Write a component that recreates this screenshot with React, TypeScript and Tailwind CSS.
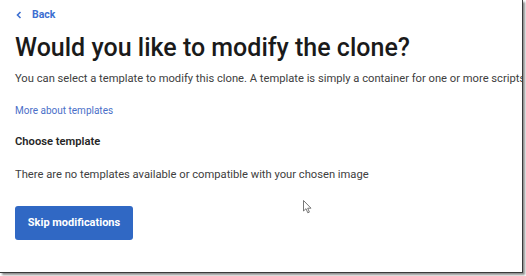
import React from "react";

export default function App() {
  return (
    <div className="w-[526px] h-[276px] bg-white" style={{ fontFamily: "Roboto, 'Liberation Sans', sans-serif" }}>
      <div className="w-[523px] h-[273px] bg-white overflow-hidden border-r border-b border-[#3a3a3a] shadow-[2px_2px_2px_rgba(0,0,0,0.45)] relative">
        <div className="pl-[15px] pt-[8px]">
          <a className="flex items-center gap-[10px] text-[10.5px] font-bold text-[#3d6fd1] h-[14px]">
            <svg width="6" height="8" viewBox="0 0 6 8" className="ml-[1px]">
              <path d="M4.5 1 L1.5 4 L4.5 7" fill="none" stroke="#3d6fd1" strokeWidth="1.6" />
            </svg>
            <span>Back</span>
          </a>
          <h1 className="mt-[10px] text-[25px] leading-[32px] font-medium text-[#1a1a1a]">
            Would you like to modify the clone?
          </h1>
          <p className="mt-[7px] text-[11.2px] leading-[16px] text-[#404040] whitespace-nowrap">
            You can select a template to modify this clone. A template is simply a container for one or more scripts
          </p>
          <p className="mt-[17px] text-[10px] leading-[14px] text-[#4a6fc8]">More about templates</p>
          <h2 className="mt-[16px] text-[11.2px] leading-[16px] font-semibold text-[#262626]">Choose template</h2>
          <p className="mt-[17px] text-[11.2px] leading-[16px] text-[#404040]">
            There are no templates available or compatible with your chosen image
          </p>
          <button className="mt-[23px] w-[118px] h-[34px] rounded-[3px] bg-[#3068c4] text-white text-[11px] font-bold">
            Skip modifications
          </button>
        </div>
        <svg className="absolute left-[303px] top-[200px]" width="9" height="14" viewBox="0 0 9 14">
          <path d="M0.5 0.5 L0.5 11 L3 8.7 L4.8 12.8 L6.4 12.1 L4.7 8.2 L8 8.2 Z" fill="white" stroke="#555" strokeWidth="0.8" />
        </svg>
      </div>
    </div>
  );
}
